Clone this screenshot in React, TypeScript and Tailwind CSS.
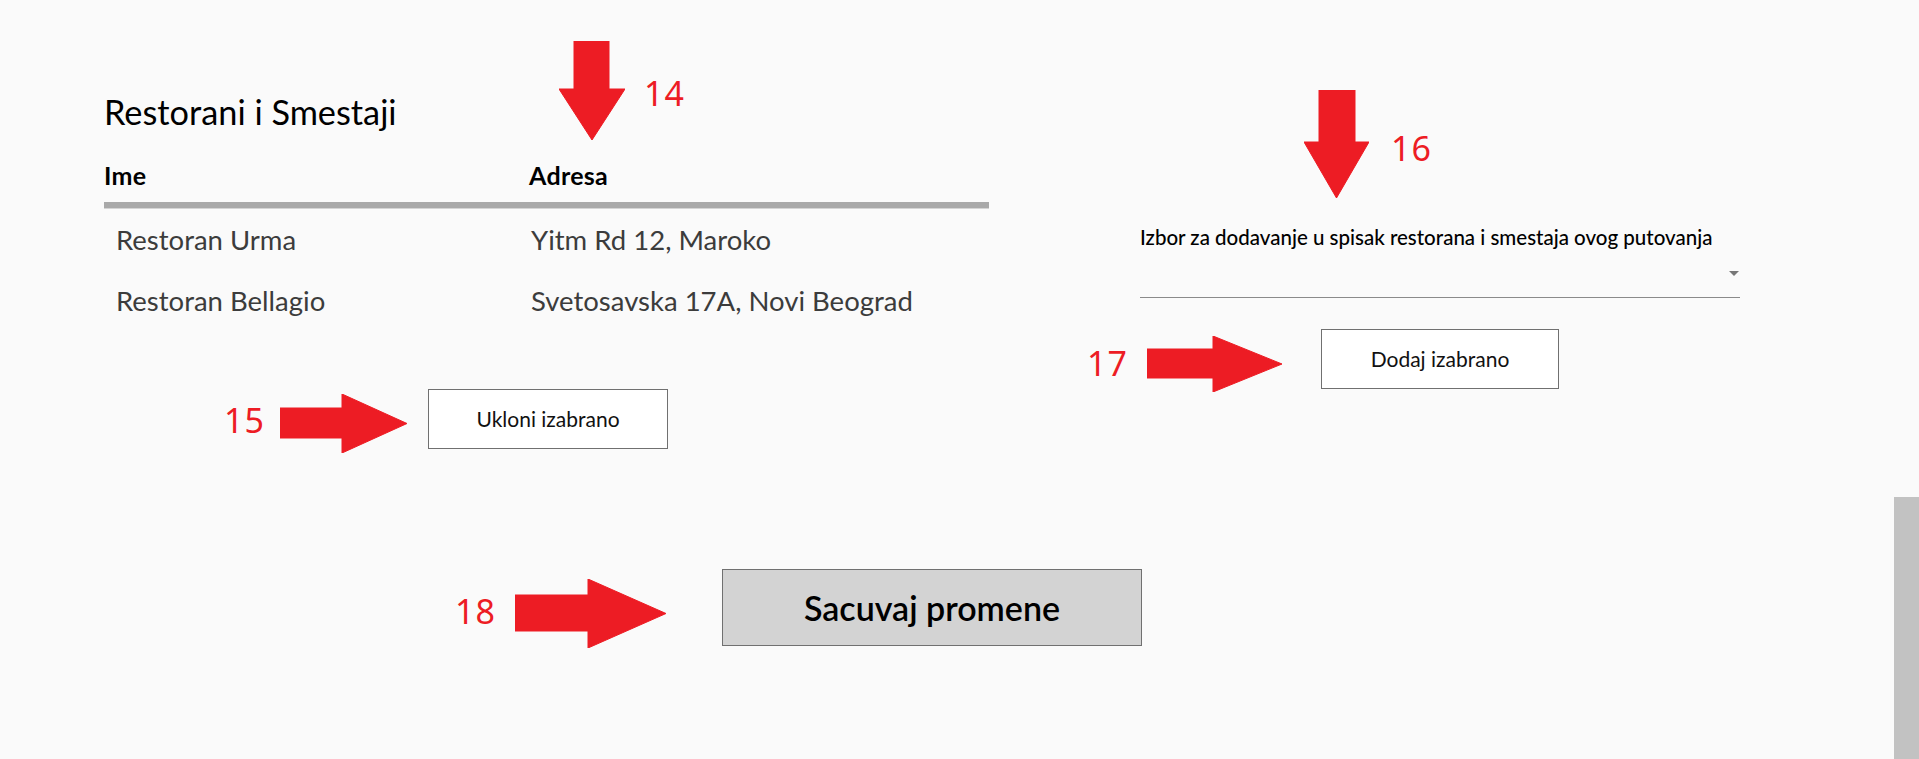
const RED = "#ed1c24";

type DownProps = { w: number; h: number; shaftL: number; shaftR: number; headY: number };
type RightProps = { w: number; h: number; shaftT: number; shaftB: number; headX: number };

function DownArrow({ w, h, shaftL, shaftR, headY }: DownProps) {
  const pts = `${shaftL},0 ${shaftR},0 ${shaftR},${headY} ${w},${headY} ${w / 2},${h} 0,${headY} ${shaftL},${headY}`;
  return (
    <svg className="shrink-0" width={w} height={h} viewBox={`0 0 ${w} ${h}`}>
      <polygon points={pts} fill={RED} stroke={RED} strokeWidth={1} strokeLinejoin="round" />
    </svg>
  );
}

function RightArrow({ w, h, shaftT, shaftB, headX }: RightProps) {
  const pts = `0,${shaftT} ${headX},${shaftT} ${headX},0 ${w},${h / 2} ${headX},${h} ${headX},${shaftB} 0,${shaftB}`;
  return (
    <svg className="shrink-0" width={w} height={h} viewBox={`0 0 ${w} ${h}`}>
      <polygon points={pts} fill={RED} stroke={RED} strokeWidth={1} strokeLinejoin="round" />
    </svg>
  );
}

function Num({ children, className = "" }: { children: React.ReactNode; className?: string }) {
  return (
    <span
      className={`w-[40px] shrink-0 font-['Noto_Sans',sans-serif] text-[34px] leading-[34px] tracking-[1px] text-[#ed1c24] ${className}`}>
      {children}
    </span>
  );
}

const rows = [
  { name: "Restoran Urma", address: "Yitm Rd 12, Maroko" },
  { name: "Restoran Bellagio", address: "Svetosavska 17A, Novi Beograd" },
];

export default function App() {
  return (
    <div className="relative flex h-[759px] w-[1919px] flex-col overflow-hidden bg-[#fafafa] font-[Lato,sans-serif] text-black">
      <div className="flex items-start">
        {/* lista restorana */}
        <section className="ml-[104px] w-[885px] pt-[92px]">
          <h1 className="text-[34.3px] leading-[40px] font-normal">Restorani i Smestaji</h1>
          <div className="mt-[28px] grid grid-cols-[425px_1fr] text-[25px] leading-[30px] font-bold tracking-[0.3px]">
            <span>Ime</span>
            <span>Adresa</span>
          </div>
          <div className="mt-[12px] h-[6px] bg-[#a9a9a9]" />
          <div className="h-px bg-[#d4d4d4]" />
          {rows.map((r) => (
            <div key={r.name} className="grid grid-cols-[425px_1fr] text-[27.5px] leading-[61px] text-[#3c3c3c]">
              <span className="pl-[12px]">{r.name}</span>
              <span className="pl-[2px]">{r.address}</span>
            </div>
          ))}
          <div className="mt-[58px] ml-[120px] flex h-[60px] items-start gap-[21px]">
            <div className="mt-[5px] flex items-start gap-[16px]">
              <Num className="mt-[9px]">15</Num>
              <RightArrow w={127} h={59} shaftT={14} shaftB={44} headX={62} />
            </div>
            <button className="flex h-[60px] w-[240px] items-center justify-center border border-[#707070] bg-white text-[21px] text-[#111]">
              Ukloni izabrano
            </button>
          </div>
        </section>

        {/* izbor za dodavanje */}
        <section className="ml-[98px] pt-[90px]">
          <div className="ml-[217px] flex items-start gap-[22px]">
            <DownArrow w={65} h={108} shaftL={15} shaftR={51} headY={52} />
            <Num className="mt-[41px]">16</Num>
          </div>
          <div className="mt-[27px] ml-[53px] w-[600px]">
            <label className="block text-[20.5px] leading-[24px] font-medium">
              Izbor za dodavanje u spisak restorana i smestaja ovog putovanja
            </label>
            <div className="flex h-[49px] items-center justify-end border-b border-[#8a8a8a] pr-[1px]">
              <svg width="10" height="5" viewBox="0 0 10 5">
                <polygon points="0,0 10,0 5,5" fill="#777" />
              </svg>
            </div>
          </div>
          <div className="mt-[31px] flex h-[60px] items-start gap-[39px]">
            <div className="mt-[7px] flex items-start gap-[20px]">
              <Num className="mt-[10px]">17</Num>
              <RightArrow w={135} h={56} shaftT={13} shaftB={42} headX={66} />
            </div>
            <button className="flex h-[60px] w-[238px] items-center justify-center border border-[#707070] bg-white text-[21px] text-[#111]">
              Dodaj izabrano
            </button>
          </div>
        </section>
      </div>

      <div className="mt-[120px] ml-[455px] flex items-start gap-[56px]">
        <div className="mt-[10px] flex items-start gap-[20px]">
          <Num className="mt-[15px]">18</Num>
          <RightArrow w={151} h={69} shaftT={16} shaftB={52} headX={73} />
        </div>
        <button className="flex h-[77px] w-[420px] items-center justify-center border border-[#707070] bg-[#d3d3d3] text-[34px] font-semibold">
          Sacuvaj promene
        </button>
      </div>

      {/* strelica iznad kolone Adresa */}
      <div className="absolute left-[559px] top-[41px] flex items-start gap-[19px]">
        <DownArrow w={66} h={99} shaftL={15} shaftR={50} headY={48} />
        <Num className="mt-[35px]">14</Num>
      </div>

      {/* scrollbar */}
      <div className="absolute right-0 top-[497px] h-[262px] w-[25px] bg-[#c2c2c2]" />
    </div>
  );
}
